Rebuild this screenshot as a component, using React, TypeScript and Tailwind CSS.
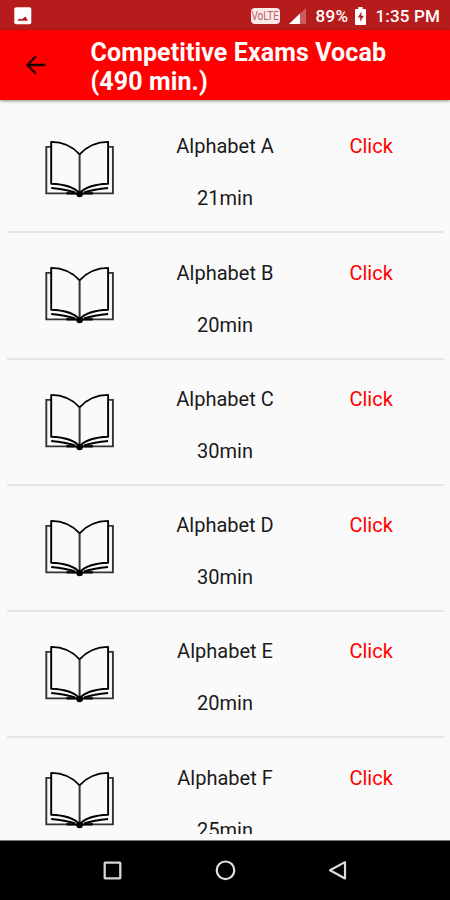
const lessons = [
  { title: 'Alphabet A', duration: '21min' },
  { title: 'Alphabet B', duration: '20min' },
  { title: 'Alphabet C', duration: '30min' },
  { title: 'Alphabet D', duration: '30min' },
  { title: 'Alphabet E', duration: '20min' },
  { title: 'Alphabet F', duration: '25min' },
];

function BookIcon() {
  return (
    <svg width="72" height="60" viewBox="0 0 72 60" fill="none" stroke="#000">
      {/* Cover */}
      <path d="M7 8.9H2.300v46.500h66.600V8.900H64.500" stroke="#333" strokeWidth="1.900" />
      {/* Pages */}
      <path
        d="M35.600 16.300C29 9 19 4 7.200 3.900v41.800c11 .4 22.300 2.600 28.400 9.600 6.100-7 17.400-9.200 28.500-9.600V3.900C52.300 4 42.300 9 35.600 16.300z"
        strokeWidth="1.900"
        strokeLinejoin="round"
      />
      <path d="M35.600 16.300V55" stroke="#333" strokeWidth="2" />
      <path d="M7.200 50c9 .7 17 2.100 24 4.500M64.100 50c-9 .7-17 2.100-24 4.500" strokeWidth="1.900" />
      <path d="M22.500 54l13.100 1 13.100-1v2.500H22.500z" fill="#000" stroke="none" />
      <circle cx="35.600" cy="56" r="3.300" fill="#000" stroke="none" />
    </svg>
  );
}

function StatusBar() {
  return (
    <div className="flex h-[30px] shrink-0 items-center bg-[#b71c1c] pt-0.5 pr-[10px] pl-[14px] text-white">
      <svg className="mt-[-1px]" width="18" height="18" viewBox="0 0 18 18">
        <rect x="0.300" y="0.300" width="17" height="17" rx="2" fill="#fff" />
        <path d="M3.500 13.800l1.500-2 2.500.5 1-.5 3-2.300 2.500 4.300z" fill="#b71c1c" />
      </svg>
      <div className="ml-auto flex items-center">
        <span className="flex h-4 w-[29px] items-center justify-center rounded-[4px] bg-[#fbeaea]">
          <span className="scale-x-[0.8] text-[12.5px] leading-none text-[#b86060]">VoLTE</span>
        </span>
        <svg className="ml-[9px]" width="18" height="18" viewBox="0 0 18 18">
          <path d="M0 17L17 1v16z" fill="#cc5c5c" />
          <path d="M0 17L11 6.600V17z" fill="#fff" />
        </svg>
        <span className="ml-[9px] w-[34px] text-[17px] leading-none font-medium tracking-[0.3px] whitespace-nowrap">
          89%
        </span>
        <svg className="mt-[-1px] ml-[5px]" width="11" height="18" viewBox="0 0 11 18">
          <path d="M3.300 0h4.400v2H10q1 0 1 1v14q0 1-1 1H1q-1 0-1-1V3q0-1 1-1h2.300z" fill="#fff" />
          <path d="M6.600 4.500L2.800 10.400h2.500v4.300l3.500-6H6.300z" fill="#b71c1c" />
        </svg>
        <span className="ml-[10px] text-[17px] leading-none font-medium tracking-[0.15px] whitespace-nowrap">
          1:35 PM
        </span>
      </div>
    </div>
  );
}

function Header() {
  return (
    <header className="z-10 flex h-[70px] shrink-0 items-center bg-[#ff0000] shadow-[0_1px_3px_rgba(0,0,0,0.45)]">
      <button className="ml-[25px] w-[65.500px]" aria-label="Back">
        <svg width="22" height="20" viewBox="0 0 22 20" fill="none" stroke="#200000" strokeWidth="2.300">
          <path d="M20.500 10H2.500M11 1.300L2.300 10l8.700 8.700" />
        </svg>
      </button>
      <h1 className="pt-[3px] text-[25px] leading-[29px] font-bold tracking-[0.1px] whitespace-nowrap text-white">
        Competitive Exams Vocab
        <br />
        (490 min.)
      </h1>
    </header>
  );
}

function NavBar() {
  return (
    <nav className="flex h-[60px] shrink-0 items-center justify-center gap-[92px] border-t border-[#777] bg-black pb-px">
      <svg width="20" height="20" viewBox="0 0 20 20" fill="none" stroke="#d6d6d6" strokeWidth="2.300">
        <rect x="2.700" y="2.700" width="15.600" height="15.600" rx="0.500" />
      </svg>
      <svg width="22" height="22" viewBox="0 0 22 22" fill="none" stroke="#e2e2e2" strokeWidth="2.200">
        <circle cx="11.500" cy="11.300" r="8.800" />
      </svg>
      <svg width="20" height="20" viewBox="0 0 20 20" fill="none" stroke="#ddd" strokeWidth="2.200" strokeLinejoin="round">
        <path d="M17 2.100v16.400L2 10.300z" />
      </svg>
    </nav>
  );
}

export default function App() {
  return (
    <div className="flex h-[900px] w-[450px] flex-col overflow-hidden bg-[#fafafa] font-['Roboto',sans-serif]">
      <StatusBar />
      <Header />
      <main className="mr-[6px] mb-[6px] ml-[7px] min-h-0 flex-1 overflow-hidden pt-[7px]">
        {lessons.map((lesson) => (
          <div
            key={lesson.title}
            className="grid h-[126.25px] grid-cols-3 border-b-2 border-[#e6e6e6] text-center text-[20px] leading-6 text-[#1a1a1a]"
          >
            <div className="flex justify-center pt-[31px]">
              <BookIcon />
            </div>
            <div className="pt-[27.3px] pr-px">
              <p>{lesson.title}</p>
              <p className="mt-[28px]">{lesson.duration}</p>
            </div>
            <div className="pt-[27.3px] text-[#ff0000]">Click</div>
          </div>
        ))}
      </main>
      <NavBar />
    </div>
  );
}
